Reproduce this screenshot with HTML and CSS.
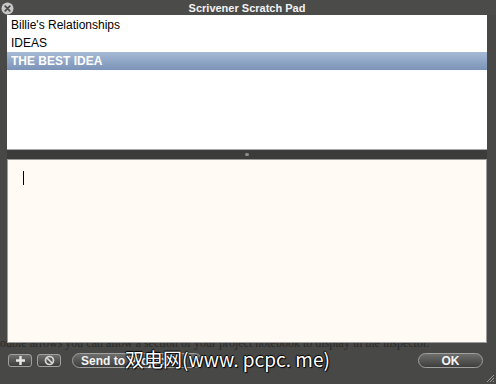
FILE: index.html
```html
<!DOCTYPE html>
<html lang="en">
  <head>
    <meta charset="UTF-8" />
    <title>Scrivener Scratch Pad</title>
    <link rel="stylesheet" href="styles.css">
  </head>
  <body>
    <div class="hud-window">
      <div class="titlebar">
        <span class="close-btn">
          <svg width="13" height="13" viewBox="0 0 13 13">
            <circle cx="6.5" cy="6.5" r="6" fill="#c8c8c8" />
            <path d="M4.2 4.2 L8.8 8.8 M8.8 4.2 L4.2 8.8" stroke="#4a4a4a" stroke-width="1.8" stroke-linecap="round" />
          </svg>
        </span>
        <span class="title">Scrivener Scratch Pad</span>
      </div>

      <div class="panels">
        <ul class="note-list">
          <li>Billie's Relationships</li>
          <li>IDEAS</li>
          <li class="selected">THE BEST IDEA</li>
        </ul>
        <div class="splitter"><span class="grip"></span></div>
        <div class="note-text"><span class="caret"></span></div>
      </div>

      <div class="bottom-bar">
        <div class="behind-text">ouble arrows you can allow a section of your project notebook to display in the inspector.</div>
        <button class="hud-btn square">
          <svg width="11" height="11" viewBox="0 0 11 11">
            <path d="M5.5 1 V10 M1 5.5 H10" stroke="#e8e8e8" stroke-width="2.4" />
          </svg>
        </button>
        <button class="hud-btn square">
          <svg width="11" height="11" viewBox="0 0 11 11">
            <circle cx="5.5" cy="5.5" r="4" fill="none" stroke="#d8d8d8" stroke-width="1.7" />
            <path d="M3 3 L8 8" stroke="#d8d8d8" stroke-width="1.7" />
          </svg>
        </button>
        <button class="hud-btn pill send">Send to Project</button>
        <button class="hud-btn pill ok">OK</button>
        <div class="watermark">双电网(www. pcpc. me)</div>
        <svg class="resize-grip" width="10" height="10" viewBox="0 0 10 10">
          <path d="M9 2 L2 9 M9 5 L5 9 M9 8 L8 9" stroke="#9a9a9a" stroke-width="1" />
        </svg>
      </div>
    </div>
  </body>
</html>
```

FILE: styles.css
```css
body {
  margin: 0;
  padding: 0;
  background-color: #484846;
  font-family: "Lucida Grande", "DejaVu Sans", sans-serif;
}

.hud-window {
  width: 496px;
  height: 384px;
  display: flex;
  flex-direction: column;
  overflow: hidden;
}

.titlebar {
  height: 15px;
  display: flex;
  align-items: center;
  justify-content: center;
  position: relative;
  background-color: #4b4b4a;
}

.close-btn {
  position: absolute;
  left: 1px;
  top: 0;
  height: 13px;
}

.title {
  color: #f2f2f2;
  font-family: "Liberation Sans", Arial, sans-serif;
  font-weight: bold;
  font-size: 11px;
  margin-left: -2px;
  margin-top: 1px;
}

.panels {
  padding: 0 9px 0 7px;
  display: flex;
  flex-direction: column;
  position: relative;
  z-index: 1;
}

.note-list {
  list-style: none;
  margin: 0;
  padding: 1px 0 0;
  height: 133px;
  background-color: #fff;
  border-bottom: 1px solid #a8a8a8;
}

.note-list li {
  height: 18px;
  line-height: 18px;
  padding-left: 4px;
  font-family: "Liberation Sans", Arial, sans-serif;
  font-size: 12px;
  color: #000;
}

.note-list li.selected {
  background: linear-gradient(#a6bad6, #7b93b7);
  color: #fff;
  font-weight: bold;
}

.splitter {
  height: 9px;
  background-color: #3c3c3b;
  display: flex;
  align-items: center;
  justify-content: center;
}

.grip {
  width: 4px;
  height: 3px;
  background-color: #8c8c8c;
  border-radius: 2px;
}

.note-text {
  background-color: #fffbf4;
  border: 1px solid #9c9c9c;
  padding: 11px 15px;
  box-sizing: content-box;
  height: 160px;
}

.caret {
  display: block;
  width: 1px;
  height: 14px;
  background-color: #000;
}

.bottom-bar {
  position: relative;
  flex: 1;
  display: flex;
  align-items: flex-start;
  padding: 10px 0 0 8px;
}

.behind-text {
  position: absolute;
  left: 0;
  top: -7px;
  white-space: nowrap;
  font-family: "Liberation Serif", "Times New Roman", serif;
  font-size: 12px;
  color: #2a2a29;
}

.hud-btn {
  position: relative;
  height: 14px;
  border: 1px solid #a0a0a0;
  background: linear-gradient(#6e6e6d, #3e3e3d);
  color: #f4f4f4;
  font-family: "Liberation Sans", Arial, sans-serif;
  font-weight: bold;
  font-size: 12px;
  padding: 0;
  display: flex;
  align-items: center;
  justify-content: center;
  box-sizing: border-box;
}

.hud-btn.square {
  width: 24px;
  height: 13px;
  border-radius: 3px;
  margin-right: 5px;
  margin-top: 1px;
}

.hud-btn.pill {
  border-radius: 8px;
}

.hud-btn.send {
  width: 130px;
  height: 15px;
  margin-left: 6px;
  justify-content: flex-start;
  padding-left: 8px;
}

.hud-btn.ok {
  width: 65px;
  height: 15px;
  margin-left: auto;
  margin-right: 13px;
}

.watermark {
  position: absolute;
  left: 125px;
  top: 2px;
  z-index: 2;
  font-family: "Noto Sans CJK SC", "DejaVu Sans", sans-serif;
  font-size: 19px;
  color: #fff;
  white-space: nowrap;
  text-shadow: 1px 1px 1px #000, -1px 0 1px #000, 0 -1px 1px #000;
}

.resize-grip {
  position: absolute;
  right: 1px;
  bottom: 1px;
}
```
